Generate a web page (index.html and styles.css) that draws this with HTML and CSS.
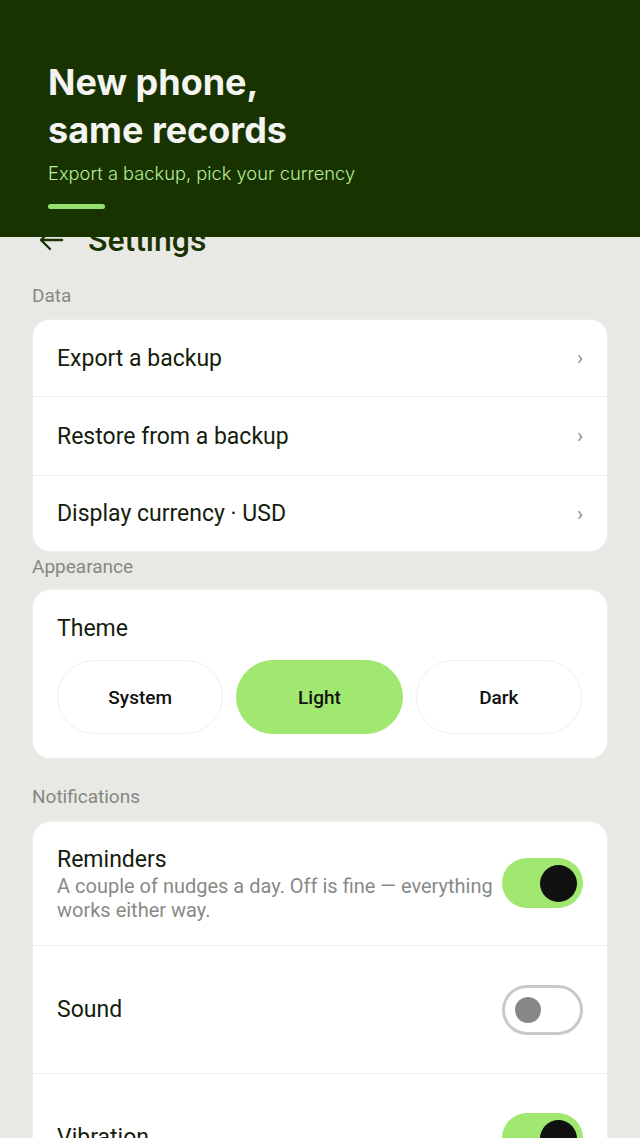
FILE: index.html
```html
<!DOCTYPE html>
<html lang="en">
<head>
<meta charset="utf-8">
<title>Settings</title>
<link rel="stylesheet" href="styles.css">
</head>
<body>
<div class="page">
  <div class="topbar">
    <svg class="back" width="26" height="24" viewBox="0 0 26 24"><path d="M24 12H3M12 3L3 12l9 9" fill="none" stroke="#1a3300" stroke-width="2.4" stroke-linecap="round" stroke-linejoin="round"/></svg>
    <h1 class="title">Settings</h1>
  </div>

  <div class="label label-data">Data</div>
  <div class="card">
    <div class="row link"><span>Export a backup</span><span class="chev">›</span></div>
    <div class="row link mid"><span>Restore from a backup</span><span class="chev">›</span></div>
    <div class="row link"><span>Display currency · USD</span><span class="chev">›</span></div>
  </div>

  <div class="label label-app">Appearance</div>
  <div class="card theme-card">
    <div class="theme-title">Theme</div>
    <div class="seg">
      <div class="opt">System</div>
      <div class="opt on">Light</div>
      <div class="opt">Dark</div>
    </div>
  </div>

  <div class="label label-notif">Notifications</div>
  <div class="card">
    <div class="row switch-row first">
      <div class="txt">
        <div class="name">Reminders</div>
        <div class="desc">A couple of nudges a day. Off is fine — everything works either way.</div>
      </div>
      <div class="toggle on"><span class="thumb"></span></div>
    </div>
    <div class="row switch-row tall">
      <div class="txt"><div class="name">Sound</div></div>
      <div class="toggle off"><span class="thumb"></span></div>
    </div>
    <div class="row switch-row tall">
      <div class="txt"><div class="name">Vibration</div></div>
      <div class="toggle on"><span class="thumb"></span></div>
    </div>
  </div>
</div>

<div class="hero">
  <h2 class="hero-title">New phone,<br>same records</h2>
  <p class="hero-sub">Export a backup, pick your currency</p>
  <div class="hero-bar"></div>
</div>
</body>
</html>
```

FILE: styles.css
```css
* { box-sizing: border-box; }
html, body { margin: 0; padding: 0; }
body {
  background: #e8e9e5;
  font-family: Roboto, "Noto Sans", sans-serif;
  color: #141d0c;
  width: 640px;
  height: 1138px;
  overflow: hidden;
  position: relative;
}
.page { padding: 212px 32px 0 32px; }

.topbar {
  height: 56px;
  display: flex;
  align-items: center;
  padding-left: 6px;
  gap: 24px;
}
.back { display: block; }
.title {
  margin: 0;
  font-size: 32px;
  line-height: 40px;
  font-weight: 500;
  color: #1a3300;
}

.label {
  font-size: 19px;
  line-height: 22px;
  color: #858882;
}
.label-data { margin-top: 17px; margin-bottom: 12px; }
.label-app { margin-top: 4px; margin-bottom: 11px; }
.label-notif { margin-top: 27px; margin-bottom: 13px; }

.card {
  background: #fff;
  border: 1px solid #eeefec;
  border-radius: 18px;
  overflow: hidden;
}
.row {
  display: flex;
  align-items: center;
  justify-content: space-between;
  padding: 0 24px;
  font-size: 23px;
}
.row + .row { border-top: 1px solid #eeefec; }
.row.link { height: 76px; }
.row.link.mid { height: 79px; }
.chev { color: #8a8d88; font-size: 20px; }

.theme-card { padding: 25px 25px 24px 24px; }
.theme-title { font-size: 23px; line-height: 28px; }
.seg {
  margin-top: 17px;
  display: grid;
  grid-template-columns: 1fr 1fr 1fr;
  gap: 13px;
}
.opt {
  height: 74px;
  border-radius: 37px;
  border: 1px solid #eeefec;
  display: flex;
  align-items: center;
  justify-content: center;
  font-size: 19px;
  font-weight: 500;
  color: #111;
}
.opt.on { background: #a0e870; border-color: #a0e870; }

.switch-row { gap: 4px; }
.switch-row.first { padding-top: 24px; padding-bottom: 23px; }
.switch-row.first .toggle { margin-top: -2px; }
.switch-row.tall { min-height: 128px; }
.name { font-size: 23px; line-height: 28px; }
.desc { font-size: 20px; line-height: 24px; color: #878a85; }

.toggle {
  flex: none;
  width: 81px;
  height: 50px;
  border-radius: 25px;
  position: relative;
}
.toggle.on { background: #a0e870; }
.toggle.on .thumb {
  position: absolute;
  right: 6px;
  top: 7px;
  width: 37px;
  height: 37px;
  border-radius: 50%;
  background: #111;
}
.toggle.off { background: #fff; border: 3px solid #c8cbc4; }
.toggle.off .thumb {
  position: absolute;
  left: 10px;
  top: 9px;
  width: 26px;
  height: 26px;
  border-radius: 50%;
  background: #888;
}

.hero {
  position: absolute;
  top: 0;
  left: 0;
  width: 640px;
  height: 237px;
  background: #183300;
  padding: 58px 48px 0 48px;
}
.hero-title {
  margin: 0;
  font-family: Inter, "Noto Sans", sans-serif;
  font-size: 36px;
  line-height: 48px;
  font-weight: 700;
  color: #f4f4f2;
}
.hero-sub {
  margin: 5px 0 0 0;
  font-family: Inter, "Noto Sans", sans-serif;
  font-size: 18.3px;
  line-height: 28px;
  font-weight: 300;
  color: #b6ec9a;
}
.hero-bar {
  margin-top: 17px;
  width: 57px;
  height: 5px;
  border-radius: 3px;
  background: #94e070;
}
```
